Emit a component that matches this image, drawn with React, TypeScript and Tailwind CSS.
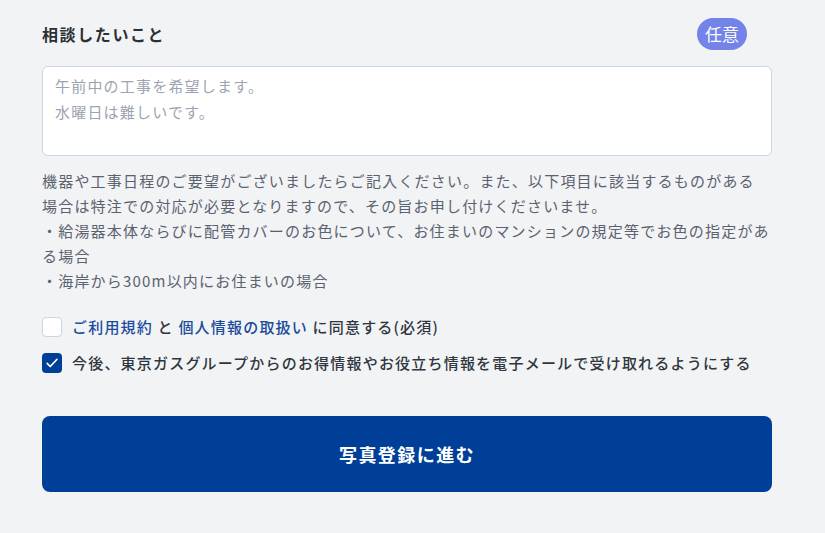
import React, { useState } from "react";

const font = { fontFamily: '"Noto Sans CJK JP", "Noto Sans", sans-serif' };

function Check({ checked, onChange }: { checked: boolean; onChange: () => void }) {
    return (
        <button
            type="button"
            role="checkbox"
            aria-checked={checked}
            onClick={onChange}
            className={`flex h-5 w-5 shrink-0 items-center justify-center rounded-[4px] ${checked ? "bg-[#003f98]" : "border border-[#c9d4e4] bg-white"}`}
        >
            {checked && (
                <svg className="h-[14px] w-[14px]" viewBox="0 0 16 16" fill="none" stroke="white" strokeWidth="2" strokeLinecap="round" strokeLinejoin="round">
                    <path d="M2.5 8.5l3.5 3.5 7.5-8" />
                </svg>
            )}
        </button>
    );
}

export default function App() {
    const [agree, setAgree] = useState(false);
    const [mail, setMail] = useState(true);

    return (
        <div className="min-h-screen bg-[#f2f3f5]" style={font}>
            <div className="ml-[42px] w-[730px] pt-[18px] pb-[41px]">
                <div className="flex h-8 items-center justify-between">
                    <h2 className="text-[16px] font-bold tracking-[0.1em] text-[#2b2f36]">相談したいこと</h2>
                    <span className="mr-[25px] flex h-8 w-[50px] items-center justify-center rounded-full bg-[#7383e8] text-[17px] text-white">任意</span>
                </div>

                <textarea
                    rows={3}
                    placeholder={"午前中の工事を希望します。\n水曜日は難しいです。"}
                    className="mt-4 block h-[90px] w-full resize-none rounded-[6px] border border-[#cbd6e6] bg-white px-3 pt-[6px] text-[15px] leading-[26px] tracking-[0.08em] text-[#2b2f36] outline-none placeholder:text-[#9da4b1]"
                    style={font}
                />

                <div className="mt-[12px] text-[15px] leading-[25px] tracking-[0.08em] text-[#5a6270]">
                    <p>機器や工事日程のご要望がございましたらご記入ください。また、以下項目に該当するものがある<br />場合は特注での対応が必要となりますので、その旨お申し付けくださいませ。</p>
                    <p>・給湯器本体ならびに配管カバーのお色について、お住まいのマンションの規定等でお色の指定がある場合</p>
                    <p>・海岸から300m以内にお住まいの場合</p>
                </div>

                <div className="mt-[23px] flex flex-col gap-[13px]">
                    <label className="flex items-center gap-[10px] text-[15px] font-medium tracking-[0.08em] text-[#2f3640]">
                        <Check checked={agree} onChange={() => setAgree(!agree)} />
                        <span>
                            <a href="#" className="text-[#1a4b9c]">ご利用規約</a> と <a href="#" className="text-[#1a4b9c]">個人情報の取扱い</a> に同意する(必須)
                        </span>
                    </label>
                    <label className="flex items-center gap-[10px] text-[15px] font-medium tracking-[0.08em] text-[#2f3640]">
                        <Check checked={mail} onChange={() => setMail(!mail)} />
                        <span>今後、東京ガスグループからのお得情報やお役立ち情報を電子メールで受け取れるようにする</span>
                    </label>
                </div>

                <button
                    type="button"
                    className="mt-[42px] flex h-[76px] w-full items-center justify-center rounded-[8px] bg-[#003f98] text-[18px] font-bold tracking-[0.08em] text-white"
                >
                    写真登録に進む
                </button>
            </div>
        </div>
    );
}
